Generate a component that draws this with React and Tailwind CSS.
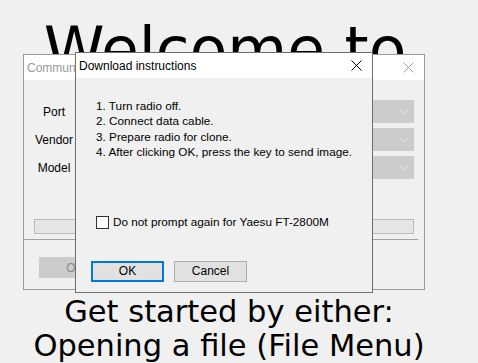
import React from "react";

const XIcon = ({ className }) => (
  <svg width="11" height="11" viewBox="0 0 11 11" className={className}>
    <path d="M0.5 0.5 L10.5 10.5 M10.5 0.5 L0.5 10.5" stroke="currentColor" strokeWidth="1" fill="none" />
  </svg>
);

const Chevron = () => (
  <svg width="9" height="5" viewBox="0 0 9 5" className="text-[#e8e8e8]">
    <path d="M0.5 0.5 L4.5 4.5 L8.5 0.5" stroke="currentColor" strokeWidth="1" fill="none" />
  </svg>
);

const steps = [
  "1. Turn radio off.",
  "2. Connect data cable.",
  "3. Prepare radio for clone.",
  "4. After clicking OK, press the key to send image.",
];

// Background "Communications" window, inactive
const CommWindow = () => (
  <div className="absolute left-[23px] top-[54px] w-[402px] h-[236px] border border-[#9a9a9a] bg-[#f0f0f0] flex flex-col">
    <div className="h-[25px] bg-white flex items-center justify-between pl-[3px] pr-[10px] shrink-0">
      <span className="text-[12px] text-[#999999]">Communications</span>
      <XIcon className="text-[#a0a0a0]" />
    </div>
    <div className="flex flex-1">
      <div className="w-[60px] flex flex-col items-center pt-[23px] gap-[12px] text-[12px] text-black">
        <span className="h-[16px]">Port</span>
        <span className="h-[16px]">Vendor</span>
        <span className="h-[16px]">Model</span>
      </div>
      <div className="flex-1 flex flex-col pt-[20px] pr-[10px] gap-[5px]">
        {[0, 1, 2].map((i) => (
          <div key={i} className="h-[23px] bg-[#cccccc] flex items-center justify-end pr-[5px]">
            <Chevron />
          </div>
        ))}
      </div>
    </div>
    <div className="px-[10px] pb-[5px]">
      <div className="h-[15px] bg-[#e6e6e6] border border-[#bcbcbc]"></div>
    </div>
    <div className="h-px bg-[#a0a0a0] mr-[6px]"></div>
    <div className="pl-[15px] pt-[17px] pb-[11px]">
      <div className="w-[72px] h-[21px] bg-[#cccccc] flex items-center justify-center text-[12px] text-[#8a8a8a]">
        OK
      </div>
    </div>
  </div>
);

const DownloadDialog = () => (
  <div className="absolute left-[75px] top-[52px] w-[298px] h-[241px] border border-[#6e6e6e] bg-[#f0f0f0] flex flex-col">
    <div className="h-[25px] bg-white flex items-center justify-between pl-[3px] pr-[10px] shrink-0">
      <span className="text-[12px] text-black">Download instructions</span>
      <XIcon className="text-black" />
    </div>
    <div className="flex flex-col pl-[20px] pt-[20px] text-[11.75px] text-black leading-[15.3px]">
      {steps.map((s) => (
        <span key={s}>{s}</span>
      ))}
    </div>
    <div className="flex items-center pl-[20px] mt-[54px] gap-[4px] text-[11.75px] text-black">
      <div className="w-[13px] h-[13px] border border-[#333333] bg-white"></div>
      <span>Do not prompt again for Yaesu FT-2800M</span>
    </div>
    <div className="flex pl-[15px] mt-[30px] gap-[10px] text-[12px] text-black">
      <div className="w-[73px] h-[21px] border-2 border-[#0078d7] bg-[#e1e1e1] flex items-center justify-center">
        OK
      </div>
      <div className="w-[73px] h-[21px] border border-[#adadad] bg-[#e1e1e1] flex items-center justify-center">
        Cancel
      </div>
    </div>
  </div>
);

export default function App() {
  return (
    <div
      className="relative w-[478px] h-[363px] overflow-hidden bg-[#f0f0f0]"
      style={{ fontFamily: '"Liberation Sans", Arial, sans-serif' }}
    >
      <div className="flex flex-col items-center pr-[20px] text-black" style={{ fontFamily: '"DejaVu Sans", sans-serif' }}>
        <div className="mt-[15px] mr-[8px] text-[61.5px] leading-[70px]">Welcome to</div>
        <div className="mt-[210px] text-[30.5px] leading-[34px] flex flex-col items-center">
          <span>Get started by either:</span>
          <span>Opening a file (File Menu)</span>
        </div>
      </div>
      <CommWindow />
      <DownloadDialog />
    </div>
  );
}
